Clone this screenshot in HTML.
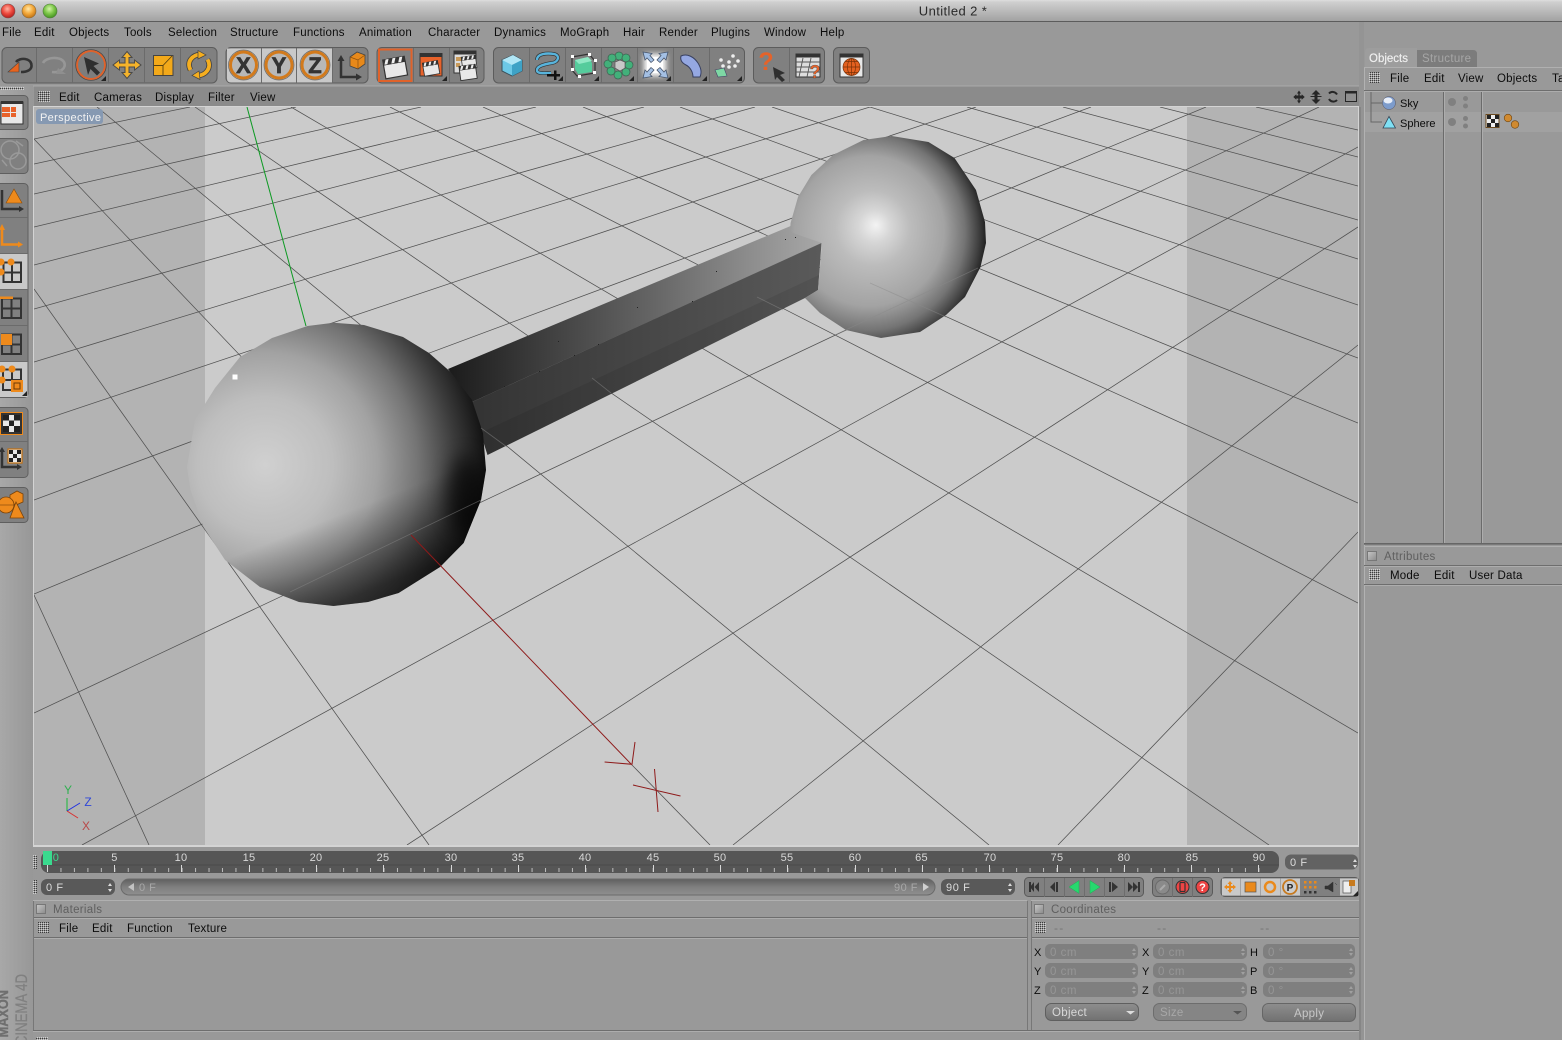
<!DOCTYPE html>
<html><head><meta charset="utf-8"><title>Untitled 2 *</title>
<style>
html,body{margin:0;padding:0;background:#999;width:1562px;height:1040px;overflow:hidden}
svg{display:block;position:absolute;left:0;top:0}
text{font-family:"Liberation Sans",sans-serif}
.m{font-size:11.5px;fill:#0c0c0c;letter-spacing:.2px}
.h{font-size:11.5px;fill:#5f5f5f;letter-spacing:.3px}
.n{font-size:11px;fill:#d8d8d8;text-anchor:middle;letter-spacing:.3px}
.f{font-size:11px;fill:#ddd;letter-spacing:.6px}
.d{font-size:12px;fill:#757575;letter-spacing:1.2px}
.v{font-size:11.5px;fill:#969696;letter-spacing:.5px}
.l{font-size:11px;fill:#0c0c0c}
.xyz{font-size:22px;font-weight:bold;fill:#333;text-anchor:middle;stroke:#333;stroke-width:.7px}
</style></head><body>
<svg width="1562" height="1040" viewBox="0 0 1562 1040" xmlns="http://www.w3.org/2000/svg">
<defs>
<linearGradient id="tb" x1="0" y1="0" x2="0" y2="1"><stop offset="0" stop-color="#dedede"/><stop offset=".1" stop-color="#cfcfcf"/><stop offset="1" stop-color="#a2a2a2"/></linearGradient>
<radialGradient id="tr" cx=".45" cy=".35" r=".7"><stop offset="0" stop-color="#ffb0a0"/><stop offset=".5" stop-color="#ee4a3e"/><stop offset="1" stop-color="#a81818"/></radialGradient>
<radialGradient id="ty" cx=".45" cy=".35" r=".7"><stop offset="0" stop-color="#ffe8a8"/><stop offset=".5" stop-color="#f3a83a"/><stop offset="1" stop-color="#b86a10"/></radialGradient>
<radialGradient id="tg" cx=".45" cy=".35" r=".7"><stop offset="0" stop-color="#d4f4a8"/><stop offset=".5" stop-color="#7cc648"/><stop offset="1" stop-color="#3b8a1c"/></radialGradient>
<pattern id="gp" width="2" height="2" patternUnits="userSpaceOnUse"><rect width="1" height="1" fill="#3c3c3c"/><rect x="1" y="1" width="1" height="1" fill="#d0d0d0"/></pattern>
<pattern id="tick" x="47" y="868" width="13.46" height="4" patternUnits="userSpaceOnUse"><rect width="1" height="4" fill="#bdbdbd"/></pattern>
<radialGradient id="s1" gradientUnits="userSpaceOnUse" cx="265" cy="465" r="225"><stop offset="0" stop-color="#d0d0d0"/><stop offset=".3" stop-color="#bebebe"/><stop offset=".5" stop-color="#a2a2a2"/><stop offset=".68" stop-color="#747474"/><stop offset=".85" stop-color="#3a3a3a"/><stop offset="1" stop-color="#0c0c0c"/></radialGradient>
<linearGradient id="s1b" gradientUnits="userSpaceOnUse" x1="300" y1="530" x2="330" y2="606"><stop offset="0" stop-color="#000" stop-opacity="0"/><stop offset="1" stop-color="#000" stop-opacity=".55"/></linearGradient>
<radialGradient id="s2" gradientUnits="userSpaceOnUse" cx="865" cy="235" r="125" fx="876" fy="225"><stop offset="0" stop-color="#f3f3f3"/><stop offset=".13" stop-color="#d6d6d6"/><stop offset=".3" stop-color="#bcbcbc"/><stop offset=".6" stop-color="#a3a3a3"/><stop offset=".78" stop-color="#747474"/><stop offset=".9" stop-color="#404040"/><stop offset="1" stop-color="#101010"/></radialGradient>
<linearGradient id="bt" gradientUnits="userSpaceOnUse" x1="450" y1="0" x2="822" y2="0"><stop offset="0" stop-color="#1c1c1c"/><stop offset=".25" stop-color="#3e3e3e"/><stop offset=".55" stop-color="#666"/><stop offset=".8" stop-color="#8c8c8c"/><stop offset="1" stop-color="#a8a8a8"/></linearGradient>
<linearGradient id="bf" gradientUnits="userSpaceOnUse" x1="470" y1="0" x2="822" y2="0"><stop offset="0" stop-color="#333"/><stop offset=".5" stop-color="#474747"/><stop offset="1" stop-color="#5a5a5a"/></linearGradient>
<linearGradient id="sl" x1="0" y1="0" x2="0" y2="1"><stop offset="0" stop-color="#5f5f5f"/><stop offset=".5" stop-color="#7f7f7f"/><stop offset="1" stop-color="#8f8f8f"/></linearGradient>
<linearGradient id="btn" x1="0" y1="0" x2="0" y2="1"><stop offset="0" stop-color="#8e8e8e"/><stop offset="1" stop-color="#717171"/></linearGradient>
<linearGradient id="cb" x1="0" y1="0" x2="1" y2="1"><stop offset="0" stop-color="#c8c8c8"/><stop offset="1" stop-color="#8a8a8a"/></linearGradient>
<linearGradient id="left" x1="0" y1="0" x2="1" y2="0"><stop offset="0" stop-color="#a8a8a8"/><stop offset="1" stop-color="#979797"/></linearGradient>
<filter id="gl" x="-30%" y="-30%" width="160%" height="160%"><feGaussianBlur stdDeviation="3"/></filter>
<filter id="gb" x="-100%" y="-100%" width="300%" height="300%"><feGaussianBlur stdDeviation="9"/></filter>
<clipPath id="vc"><rect x="34" y="107" width="1324" height="738"/></clipPath>
<clipPath id="s1c"><path d="M333.500 322.700L307.500 326L272 338L240 357L215 388L195 420L187 467L190.500 490L203.500 527L225 560L260 587L299 602L333.500 606L368 602L398.600 593L440 567L463.600 543L481 500L486 470L483 433L472 400L450.600 372L429 353L403 337L364 325z"/></clipPath>
<g id="clap">
<rect x="-11" y="-4" width="22" height="14" fill="#e8e8e8" stroke="#333" stroke-width="1.2"/>
<rect x="-11" y="-9" width="22" height="5" fill="#333" stroke="#333"/>
<path d="M-8-9l-2 5h3l2-5zM-1-9l-2 5h3l2-5zM6-9l-2 5h3l2-5z" fill="#eee"/>
</g>
<path id="tri" d="M0 0h-5l5-5z" fill="#222"/>
</defs>

<!-- background -->
<rect width="1562" height="1040" fill="#999"/>
<rect width="1562" height="21" fill="url(#tb)"/>
<rect y="21" width="1562" height="1" fill="#5c5c5c"/>
<circle cx="8" cy="11" r="7" fill="url(#tr)" stroke="#7a5050" stroke-width=".6"/>
<circle cx="29" cy="11" r="7" fill="url(#ty)" stroke="#86683a" stroke-width=".6"/>
<circle cx="50" cy="11" r="7" fill="url(#tg)" stroke="#4d7a3c" stroke-width=".6"/>
<text x="953" y="15.500" text-anchor="middle" font-size="13" fill="#2a2a2a" letter-spacing=".4">Untitled 2 *</text>

<!-- menu -->
<text class="m" x="2" y="36">File</text><text class="m" x="34" y="36">Edit</text><text class="m" x="69" y="36">Objects</text><text class="m" x="124" y="36">Tools</text><text class="m" x="168" y="36">Selection</text><text class="m" x="230" y="36">Structure</text><text class="m" x="293" y="36">Functions</text><text class="m" x="359" y="36">Animation</text><text class="m" x="428" y="36">Character</text><text class="m" x="494" y="36">Dynamics</text><text class="m" x="560" y="36">MoGraph</text><text class="m" x="623" y="36">Hair</text><text class="m" x="659" y="36">Render</text><text class="m" x="711" y="36">Plugins</text><text class="m" x="764" y="36">Window</text><text class="m" x="820" y="36">Help</text>

<!-- toolbar groups -->
<g stroke="#5c5c5c" fill="#808080">
<rect x="2" y="47.500" width="215" height="35.500" rx="5"/>
<rect x="226" y="47.500" width="142" height="35.500" rx="5"/>
<rect x="377" y="47.500" width="107" height="35.500" rx="5"/>
<rect x="493.500" y="47.500" width="251" height="35.500" rx="5"/>
<rect x="753.500" y="47.500" width="71" height="35.500" rx="5"/>
<rect x="833.500" y="47.500" width="36" height="35.500" rx="5"/>
</g>
<path d="M227 48.500h34v34h-30q-4 0-4-4zM261 48.500h35v34h-35zM296 48.500h36v34h-36z" fill="#c9c9c9"/>
<path d="M36.500 48V83M72.500 48V83M108.500 48V83M144.500 48V83M180.500 48V83M261.500 48V83M296.500 48V83M332.500 48V83M413.500 48V83M449.500 48V83M529.500 48V83M565.500 48V83M601.500 48V83M637.500 48V83M673.500 48V83M709.500 48V83M789.500 48V83" stroke="#6b6b6b" fill="none"/>

<!-- undo -->
<path d="M16 62C20 57 31 58 31.500 65C32 70 27 72 21 72" fill="none" stroke="#333" stroke-width="2.600"/>
<path d="M8 72L19 72L19 62z" fill="#e8641e" stroke="#444" stroke-width=".6"/>
<!-- redo ghost -->
<path d="M43 63C46 57 60 56 64 62C67 68 60 73 52 72" fill="none" stroke="#979797" stroke-width="2.600"/>
<path d="M58 68l8 6h-10z" fill="#8f8f8f"/>
<!-- select -->
<circle cx="91" cy="65" r="14" fill="#7d7d7d" stroke="#e0622a" stroke-width="2"/>
<circle cx="91" cy="65" r="15.300" fill="none" stroke="#444" stroke-width=".7"/>
<path d="M84 57L99 63.500L93.500 66L100 72.500L97 75.500L90.500 69L88 75z" fill="#2e2e2e"/>
<use href="#tri" x="106" y="81"/>
<!-- move -->
<path d="M127 51.500L132 57.500H129V63H134.500V60L141 65L134.500 70V67H129V72.500H132L127 78.500L122 72.500H125V67H119.500V70L113 65L119.500 60V63H125V57.500H122z" fill="#f5b32b" stroke="#4a4a4a" stroke-width="1"/>
<!-- scale -->
<rect x="153.500" y="55.500" width="19.500" height="20" fill="#f3a91a" stroke="#444"/>
<path d="M154 65.500h9V76M163 65.500L172 56" stroke="#5a4210" fill="none" stroke-width=".9"/>
<!-- rotate -->
<path d="M190.500 70C186 61 193 55 200 54.500M207.500 59.500C212.500 68 205 76 197 75.500" fill="none" stroke="#444" stroke-width="5.500"/>
<path d="M190.500 70C186 61 193 55 200 54.500M207.500 59.500C212.500 68 205 76 197 75.500" fill="none" stroke="#f5ae1f" stroke-width="3.800"/>
<path d="M198 50.500L206 55L198 59zM200 79.500L192 75.500L199 71z" fill="#f5ae1f" stroke="#444" stroke-width=".7"/>
<!-- XYZ -->
<g fill="#b8b8b8" stroke="#d27a1c" stroke-width="3">
<circle cx="243.500" cy="65" r="13"/><circle cx="279" cy="65" r="13"/><circle cx="315" cy="65" r="13"/>
</g>
<g fill="none" stroke="#666" stroke-width=".7"><circle cx="243.500" cy="65" r="15"/><circle cx="279" cy="65" r="15"/><circle cx="315" cy="65" r="15"/></g>
<text class="xyz" x="243.500" y="73">X</text><text class="xyz" x="279" y="73">Y</text><text class="xyz" x="315" y="73">Z</text>
<!-- coord icon -->
<path d="M341 61V77H358" fill="none" stroke="#333" stroke-width="2.500"/>
<path d="M341 55l-3.500 6h7zM362 77l-6-3.500v7z" fill="#333"/>
<path d="M350 57L357 52L365 55V64L358 69L350 66z" fill="#e8891a" stroke="#444" stroke-width=".8"/><path d="M350 57L358 60L365 55M358 60V69" fill="none" stroke="#8a5010" stroke-width=".7"/>
<!-- clappers -->
<rect x="379" y="49.500" width="32.500" height="31.500" fill="none" stroke="#e0622a" stroke-width="2"/>
<use href="#clap" transform="translate(395,67) rotate(-10)"/>
<rect x="420" y="54" width="22" height="22" fill="#e8622a" stroke="#333" stroke-width="1"/>
<rect x="419.500" y="53" width="23" height="4" fill="#333"/>
<use href="#clap" transform="translate(431,68) rotate(-10) scale(.7)"/>
<use href="#tri" x="447" y="81"/>
<rect x="454" y="51" width="22" height="22" fill="#ddd" stroke="#333"/><rect x="454" y="51" width="22" height="3.500" fill="#333"/>
<path d="M456 57h8v4h-8zM456 63h4v4h-4z" fill="#c89a5a"/>
<use href="#clap" transform="translate(469,62) rotate(-8) scale(.65)"/>
<use href="#clap" transform="translate(468,72) rotate(-8) scale(.75)"/>
<!-- primitives -->
<path d="M502 60L513 55L522 60V71L512 76L502 71z" fill="#6cc8e6" stroke="#3a4e58" stroke-width="1"/>
<path d="M502 60L512 65L522 60L513 55z" fill="#b0e6f6"/><path d="M512 65V76L522 71V60z" fill="#3ea2c6"/>
<path d="M537 60C537 53 548 53 554 54C560 55 559 62 552 63C545 64 536 66 537 71C538 74 546 73 551 73" fill="none" stroke="#333" stroke-width="3.800"/>
<path d="M537 60C537 53 548 53 554 54C560 55 559 62 552 63C545 64 536 66 537 71C538 74 546 73 551 73" fill="none" stroke="#58b4dc" stroke-width="2.400"/>
<path d="M547 74h7v-3.500h2.500v3.500h3.500v2.500h-3.500v3.500h-2.500v-3.500h-7z" fill="#111"/>
<use href="#tri" x="563" y="81"/>
<path d="M572 57L589 54L595 61V73L577 76L572 70z" fill="none" stroke="#333" stroke-width="1.200"/>
<path d="M575 60L588 57L592 63V72L578 74L575 69z" fill="#55cc9c"/><path d="M575 60L588 57L592 61L579 64z" fill="#90e8c4"/>
<g fill="#fff"><rect x="571" y="55" width="3" height="3"/><rect x="588" y="53" width="3" height="3"/><rect x="594" y="59" width="3" height="3"/><rect x="593" y="71" width="3" height="3"/><rect x="578" y="75" width="3" height="3"/><rect x="571" y="68" width="3" height="3"/></g>
<use href="#tri" x="599" y="81"/>
<g fill="#42b07a" stroke="#3f5f50" stroke-width=".7"><circle cx="619" cy="56" r="4"/><circle cx="626" cy="58" r="4"/><circle cx="629" cy="65" r="4"/><circle cx="626" cy="72" r="4"/><circle cx="618" cy="75" r="4"/><circle cx="611" cy="71" r="4"/><circle cx="608" cy="64" r="4"/><circle cx="612" cy="58" r="4"/></g>
<path d="M615 62l5-2 5 2v6l-5 3-5-3z" fill="#c8c8c8" stroke="#555" stroke-width=".7"/>
<use href="#tri" x="634" y="81"/>
<rect x="644" y="54" width="22" height="22" fill="#fff" filter="url(#gl)"/>
<rect x="647" y="57" width="16" height="16" fill="#fff"/>
<g fill="#a4c0e4" stroke="#46546a" stroke-width=".8"><path d="M643 52L652 53.500L650 55.500L654 60L651 62.500L647 58L645 60z"/><path d="M668 52L659 53.500L661 55.500L657 60L660 62.500L664 58L666 60z"/><path d="M643 78L652 76.500L650 74.500L654 70L651 67.500L647 72L645 70z"/><path d="M668 78L659 76.500L661 74.500L657 70L660 67.500L664 72L666 70z"/></g>
<use href="#tri" x="671" y="81"/>
<path d="M681 56C687 53 694 57 698 63C701 68 702 72 700 77L693 77C693 72 690 67 686 65C682 63 680 60 681 56z" fill="#95a8e2" stroke="#384060" stroke-width="1"/>
<use href="#tri" x="707" y="81"/>
<g fill="#eee"><circle cx="733" cy="56" r="1.800"/><circle cx="721" cy="60" r="1.800"/><circle cx="729" cy="62" r="1.800"/><circle cx="738" cy="61" r="1.800"/><circle cx="735" cy="66" r="1.800"/><circle cx="723" cy="66" r="1.800"/><circle cx="729" cy="67" r="1.800"/></g>
<path d="M715 70L724 68L727 76L718 77z" fill="#7ed8a4" stroke="#446" stroke-width=".6"/>
<use href="#tri" x="742" y="81"/>
<!-- help -->
<text x="766" y="70" font-size="25" font-weight="bold" fill="#e5632a" text-anchor="middle">?</text>
<path d="M773 67L785 73L780 75L785 80L782 82L777 77L775 80z" fill="#2f2f2f"/>
<rect x="796" y="54" width="24" height="23" fill="#ddd" stroke="#333"/><rect x="796" y="53.500" width="24" height="4" fill="#333"/>
<path d="M796 62h24M796 67h24M796 72h24M803 58L799 77M811 58L807 77" stroke="#555" fill="none" stroke-width=".9"/>
<text x="815" y="78" font-size="18" font-weight="bold" fill="#e5632a" text-anchor="middle" stroke="#333" stroke-width=".3">?</text>
<!-- render -->
<rect x="840" y="54" width="23" height="23" fill="#e8e8e8" stroke="#333"/><rect x="840" y="53.500" width="23" height="4" fill="#333"/>
<circle cx="851.500" cy="67" r="8.500" fill="#e4601f" stroke="#7a3208" stroke-width=".7"/>
<path d="M843 67h17M851.500 58.500v17M845 61.500h13M845 72.500h13" stroke="#7a3208" fill="none" stroke-width=".7"/><ellipse cx="851.500" cy="67" rx="4" ry="8.500" fill="none" stroke="#7a3208" stroke-width=".7"/>

<!-- viewport header -->
<rect x="34" y="86" width="1325" height="21" fill="#8b8b8b"/>
<path d="M33 86h1326" stroke="#aaa"/>
<rect x="38" y="91" width="12" height="11" fill="url(#gp)"/>
<text class="m" x="59" y="101">Edit</text><text class="m" x="94" y="101">Cameras</text><text class="m" x="155" y="101">Display</text><text class="m" x="208" y="101">Filter</text><text class="m" x="250" y="101">View</text>
<g fill="#262626">
<path d="M1299 90.500l2 3h-1.300v2h2v-1.300l3 2.800-3 2.800v-1.300h-2v2h1.300l-2 3-2-3h1.300v-2h-2v1.300l-3-2.800 3-2.800v1.300h2v-2h-1.300z"/>
<path d="M1316 90l4.500 4.500h-3V96h4v1h-4v2.500h3L1316 104l-4.500-4.500h3V97h-4v-1h4v-1.500h-3z"/>
</g>
<path d="M1329 93.500a5 5 0 0 1 8 1M1337 100a5 5 0 0 1-8-1" fill="none" stroke="#262626" stroke-width="2"/>
<rect x="1345.500" y="91.500" width="11" height="10" fill="#8f8f8f" stroke="#262626"/><rect x="1345" y="91" width="12" height="2.500" fill="#262626"/>

<!-- viewport -->
<rect x="33" y="106" width="1327" height="741" fill="#d4d4d4"/>
<rect x="34" y="107" width="1324" height="738" fill="#cbcbcb"/>
<rect x="34" y="107" width="171" height="738" fill="#b3b3b3"/>
<rect x="1187" y="107" width="171" height="738" fill="#b3b3b3"/>
<g clip-path="url(#vc)">
<g stroke="#505050" stroke-width=".75" fill="none">
<path d="M733 845L1358 345M1058 845L1358 532M407 845L1358 227M82 845L1358 147M34 713L1319 107M34 594L1206 107M34 500L1091 107M34 423L976 107M34 362L870 107M34 309L755 107M34 265L644 107M34 227L536 107M34 194L421 107M34 164L296 107M34 139L190 107"/>
<path d="M1269 845L195 107M1358 733L291 107M1358 603L390 107M1358 503L483 107M1358 423L583 107M1358 358L680 107M1358 305L772 107M1358 259L870 107M1358 220L967 107M1358 186L1063 107M1358 157L1160 107M1358 130L1256 107M989 845L97 107M34 139L411 535M632 765L710 845M429 845L34 289M149 845L34 595"/>
</g>
<path d="M247 107L306 326" stroke="#0c9a22" stroke-width="1" fill="none"/>

<!-- bar -->
<path d="M448 369L790.600 226L822 243L472 402z" fill="url(#bt)"/>
<path d="M472 402L821.500 243L818 290L805 298L487.500 455L478 425z" fill="url(#bf)"/>
<path d="M480 433L819 275L818 290L805 298L487.500 455z" fill="#000" opacity=".08"/>
<g fill="#222"><rect x="637" y="307" width="1" height="1"/><rect x="692" y="301" width="1" height="1"/><rect x="558" y="341" width="1" height="1"/><rect x="598" y="344" width="1" height="1"/><rect x="574" y="355" width="1" height="1"/><rect x="539" y="371" width="1" height="1"/><rect x="504" y="386" width="1" height="1"/><rect x="716" y="271" width="1" height="1"/><rect x="785" y="239" width="1" height="1"/><rect x="795" y="237" width="1" height="1"/></g>

<!-- spheres -->
<path d="M891.600 136L863.500 140L833 155L811.400 175L798 197L790.600 223L790 232L822 243L818 290L805 298L820 313L846 330L881 338L920 332L946 315L965 297L980.500 267L986 243L985 222L976 190L954.500 158L928.500 142z" fill="url(#s2)"/>
<path d="M333.500 322.700L307.500 326L272 338L240 357L215 388L195 420L187 467L190.500 490L203.500 527L225 560L260 587L299 602L333.500 606L368 602L398.600 593L440 567L463.600 543L481 500L486 470L483 433L472 400L450.600 372L429 353L403 337L364 325z" fill="url(#s1)"/>
<path d="M333.500 322.700L307.500 326L272 338L240 357L215 388L195 420L187 467L190.500 490L203.500 527L225 560L260 587L299 602L333.500 606L368 602L398.600 593L440 567L463.600 543L481 500L486 470L483 433L472 400L450.600 372L429 353L403 337L364 325z" fill="url(#s1b)"/>
<g clip-path="url(#s1c)"><ellipse cx="465" cy="495" rx="18" ry="40" fill="#000" opacity=".6" filter="url(#gb)"/></g>
<g stroke="#8a8a8a" stroke-width=".8" fill="none" opacity=".5">
<path d="M290 592L481 500"/>
<path d="M835 335L978 268M870 283L946 317"/>
<path d="M481 428L507 447M592 378L611 393M757 297L783 310"/>
</g>
<path d="M235 377m-2.500-2.500h5v5h-5z" fill="#fff"/>

<!-- red axis -->
<g stroke="#8e1a1a" stroke-width="1" fill="none">
<path d="M411 535L632 765M604.600 762L632 764.300L635 742M633 785L680.500 796M654.500 769L658 812"/>
</g>
<!-- small axis -->
<path d="M67 811V798" stroke="#18b838" stroke-width="1"/><path d="M67 811L80 803" stroke="#2030e0" stroke-width="1"/><path d="M67 811L78 818" stroke="#d83030" stroke-width="1"/>
<text x="68" y="794" font-size="12" fill="#30b050" text-anchor="middle">Y</text>
<text x="88" y="806" font-size="12" fill="#3048d8" text-anchor="middle">Z</text>
<text x="86" y="830" font-size="12" fill="#b84848" text-anchor="middle">X</text>
</g>
<rect x="36" y="109" width="67" height="15" rx="3" fill="#8699b2"/>
<text x="40" y="121" font-size="11" fill="#f2f2f2" letter-spacing=".35">Perspective</text>

<!-- left column -->
<rect x="0" y="86" width="33" height="954" fill="url(#left)"/>
<rect x="0" y="87" width="24" height="3" fill="url(#gp)"/>
<g stroke="#5f5f5f" fill="#808080">
<rect x="-5" y="95.500" width="33" height="34" rx="4"/>
<rect x="-5" y="138.500" width="33" height="35" rx="4"/>
<rect x="-5" y="183.500" width="33" height="214" rx="4"/>
<rect x="-5" y="407.500" width="33" height="70" rx="4"/>
<rect x="-5" y="487.500" width="33" height="35" rx="4"/>
</g>
<path d="M0 254h27.500v35H0zM0 361h27.500v36H0z" fill="#c9c9c9"/>
<path d="M0 217.500h28M0 253.500h28M0 289.500h28M0 325.500h28M0 361.500h28M0 441.500h28" stroke="#6b6b6b"/>
<!-- left icons -->
<rect x="1" y="102" width="22" height="22" fill="#e8e8e8" stroke="#333"/><rect x="1" y="101" width="22" height="3" fill="#333"/>
<path d="M2 107h8v5h-8zM11 107h5v5h-5zM2 113h8v4h-8zM11 113h5v4h-5z" fill="#e8622a"/>
<g fill="none" stroke="#9a9a9a" stroke-width="1.500"><circle cx="10" cy="150" r="9"/><circle cx="18" cy="161" r="8"/><path d="M16 141l7 5M2 160l5 6"/></g>
<path d="M2 190V209H19" fill="none" stroke="#333" stroke-width="2.500"/><path d="M19 206l5 3-5 3z" fill="#333"/>
<path d="M6 203L14 189L22 203z" fill="#ee8a1c" stroke="#8a4c0a" stroke-width=".6"/>
<path d="M2 228V244.500H19" fill="none" stroke="#ee8a1c" stroke-width="2.500"/><path d="M2 224l-3 6h6zM23 244.500l-5-3v6z" fill="#ee8a1c"/>
<path d="M3.500 262.500H21V282H3.500zM12 263V282M3 272.500H21" fill="none" stroke="#333" stroke-width="2"/>
<g fill="#ee8a1c"><circle cx="1" cy="262" r="3.500"/><circle cx="11" cy="262" r="3.500"/><circle cx="1" cy="272" r="3.500"/></g>
<path d="M2 298.500H21V318H2zM11.500 299V318M2 308.500H21" fill="none" stroke="#333" stroke-width="2"/><path d="M0 296.500H13V299H0z" fill="#ee8a1c"/>
<path d="M2 334.500H21V354H2zM11.500 335V354M2 344.500H21" fill="none" stroke="#333" stroke-width="2"/><rect x="1" y="334" width="11" height="11" fill="#ee8a1c"/>
<path d="M3 369.500H21V390H3zM12 370V390M3 380H21" fill="none" stroke="#333" stroke-width="2"/>
<g fill="#ee8a1c"><circle cx="2" cy="369" r="3.500"/><circle cx="12" cy="369" r="3.500"/><circle cx="2" cy="380" r="3.500"/></g>
<rect x="11" y="380" width="12" height="12" fill="#ee8a1c"/><rect x="14" y="383" width="6" height="6" fill="#ee8a1c" stroke="#6a3a08"/>
<use href="#tri" x="27" y="396"/>
<rect x="0" y="412" width="23" height="23" fill="#ee8a1c"/><rect x="1" y="413" width="21" height="21" fill="#333"/>
<rect x="3" y="415" width="17" height="17" fill="#e8e8e8"/>
<path d="M3 415h6v5.500H3zM14 415h6v5.500h-6zM9 420.500h5V426H9zM3 426h6v6H3zM14 426h6v6h-6z" fill="#222"/>
<path d="M2 450V467H19" fill="none" stroke="#333" stroke-width="2.500"/><path d="M2 447l-3 5h6zM22 467l-5-3v6z" fill="#333"/>
<rect x="8" y="449" width="14" height="14" fill="#e8e8e8" stroke="#c27010" stroke-width="1.200"/><path d="M9 450h4v4H9zM17 450h4v4h-4zM13 454h4v4h-4zM9 458h4v4H9zM17 458h4v4h-4z" fill="#222"/>
<path d="M10 495L17 491L23 494V502L16 505L10 502z" fill="#ee8a1c" stroke="#7a4208" stroke-width=".8"/>
<circle cx="6" cy="505" r="8" fill="#ee8a1c" stroke="#7a4208" stroke-width=".8"/><path d="M-2 505h16" stroke="#7a4208" stroke-width=".6"/>
<path d="M16 502L24 518H10z" fill="#ee8a1c" stroke="#7a4208" stroke-width=".8"/>
<!-- logo -->
<text transform="translate(8,990) rotate(-90) scale(.85,1)" text-anchor="end" font-size="15" font-weight="bold" fill="#6f6f6f" stroke="#6f6f6f" stroke-width=".4">MAXON</text>
<text transform="translate(27,974) rotate(-90) scale(.8,1)" text-anchor="end" font-size="16.500" fill="#808080" stroke="#808080" stroke-width=".3">CINEMA 4D</text>

<!-- timeline -->
<rect x="33" y="855" width="4" height="14" fill="url(#gp)"/>
<rect x="41" y="851" width="1238" height="22" rx="8" fill="#565656"/>
<path d="M41 865h1238" stroke="#4a4a4a"/>
<rect x="43" y="851" width="9" height="14" fill="#3ad98e"/>
<rect x="47" y="868" width="1213" height="4" fill="url(#tick)"/>
<g fill="#d8d8d8">
<path d="M47 865h1v7h-1zM114 865h1v7h-1zM181 865h1v7h-1zM249 865h1v7h-1zM316 865h1v7h-1zM383 865h1v7h-1zM451 865h1v7h-1zM518 865h1v7h-1zM585 865h1v7h-1zM653 865h1v7h-1zM720 865h1v7h-1zM787 865h1v7h-1zM855 865h1v7h-1zM922 865h1v7h-1zM989 865h1v7h-1zM1057 865h1v7h-1zM1124 865h1v7h-1zM1191 865h1v7h-1zM1258 865h1v7h-1z"/>
</g>
<text class="n" x="56" y="861" style="fill:#3ad98e">0</text><text class="n" x="114.500" y="861">5</text><text class="n" x="181" y="861">10</text><text class="n" x="249" y="861">15</text><text class="n" x="316" y="861">20</text><text class="n" x="383" y="861">25</text><text class="n" x="451" y="861">30</text><text class="n" x="518" y="861">35</text><text class="n" x="585" y="861">40</text><text class="n" x="653" y="861">45</text><text class="n" x="720" y="861">50</text><text class="n" x="787" y="861">55</text><text class="n" x="855" y="861">60</text><text class="n" x="921.500" y="861">65</text><text class="n" x="990" y="861">70</text><text class="n" x="1057" y="861">75</text><text class="n" x="1124" y="861">80</text><text class="n" x="1192" y="861">85</text><text class="n" x="1259" y="861">90</text>
<rect x="1285" y="854.500" width="73" height="15" rx="6" fill="#626262"/>
<text class="f" x="1290" y="866">0 F</text><path d="M1355 859l-2 3h4zM1355 868l-2-3h4z" fill="#ddd"/>

<!-- row 2 -->
<rect x="33" y="880" width="4" height="14" fill="url(#gp)"/>
<rect x="41" y="879" width="74" height="16" rx="6" fill="#595959"/>
<text class="f" x="46" y="891">0 F</text><path d="M110 883l-2 3h4zM110 892l-2-3h4z" fill="#ddd"/>
<rect x="121" y="879" width="814" height="16" rx="8" fill="url(#sl)" stroke="#6a6a6a"/>
<path d="M128 887l6-4v8z" fill="#c2c2c2"/><text x="139" y="891" font-size="11" letter-spacing=".5" fill="#a8a8a8">0 F</text>
<text x="894" y="891" font-size="11" letter-spacing=".5" fill="#a8a8a8">90 F</text><path d="M929 887l-6-4v8z" fill="#d0d0d0"/>
<rect x="941" y="879" width="74" height="16" rx="6" fill="#595959"/>
<text class="f" x="946" y="891">90 F</text><path d="M1010 883l-2 3h4zM1010 892l-2-3h4z" fill="#ddd"/>

<!-- transport -->
<rect x="1024.500" y="877.500" width="119" height="19" rx="4" fill="#808080" stroke="#5a5a5a"/>
<path d="M1044.500 878v19M1064.500 878v19M1084.500 878v19M1104.500 878v19M1124.500 878v19" stroke="#6d6d6d"/>
<g fill="#333"><path d="M1029 882h2v10h-2zM1039 882v10l-4.500-5zM1034 882v10l-4-5z"/><path d="M1055 882v10l-5-5zM1056 882h2v10h-2z"/><path d="M1109 882h2v10h-2zM1112 882l6 5-6 5z"/><path d="M1128 882l5 5-5 5zM1133 882l5 5-5 5zM1138 882h2v10h-2z"/></g>
<path d="M1069 887l10-6.500v13z" fill="#27d86e" stroke="#2a5" stroke-width=".5"/>
<path d="M1100 887l-10-6.500v13z" fill="#27d86e" stroke="#2a5" stroke-width=".5"/>
<rect x="1152.500" y="877.500" width="60" height="19" rx="4" fill="#808080" stroke="#5a5a5a"/>
<path d="M1172.500 878v19M1192.500 878v19" stroke="#6d6d6d"/>
<circle cx="1162.500" cy="887" r="7" fill="#8a8a8a" stroke="#6a6a6a"/><path d="M1160 890l5-5" stroke="#aaa" stroke-width="2"/>
<circle cx="1182.500" cy="887" r="6.500" fill="#e44" stroke="#333"/><path d="M1180 882.500h5M1180 891.500h5M1180 882.500v9M1185 882.500v9" stroke="#333" stroke-width="1.200" fill="none"/>
<circle cx="1202.500" cy="887" r="6.500" fill="#e44" stroke="#333"/><text x="1202.500" y="891" font-size="11" font-weight="bold" fill="#fff" text-anchor="middle">?</text>
<rect x="1221" y="877.500" width="138" height="19" rx="4" fill="#808080" stroke="#5a5a5a"/>
<path d="M1222 878.500h18v17h-18zM1240.500 878.500h19.500v17h-19.500zM1260.500 878.500h19.500v17h-19.500zM1280.500 878.500h19.500v17h-19.500zM1340 878.500h18v17h-18z" fill="#c9c9c9"/>
<path d="M1230 881l2.500 3h-1.500v2h2v-1.500l3 2.500-3 2.500V888h-2v2h1.500l-2.500 3-2.500-3h1.500v-2h-2v1.500l-3-2.500 3-2.500V886h2v-2h-1.500z" fill="#ea8a1c"/>
<rect x="1245" y="882" width="11" height="10" fill="#ea8a1c" stroke="#555" stroke-width=".7"/>
<circle cx="1270" cy="887" r="5" fill="none" stroke="#ea8a1c" stroke-width="2.500"/>
<circle cx="1290" cy="887" r="7" fill="#ccc" stroke="#c67a20" stroke-width="1.800"/><text x="1290" y="891" font-size="10" font-weight="bold" fill="#222" text-anchor="middle">P</text>
<g fill="#ea8a1c"><rect x="1304" y="881" width="2.500" height="2.500"/><rect x="1309" y="881" width="2.500" height="2.500"/><rect x="1314" y="881" width="2.500" height="2.500"/><rect x="1304" y="886" width="2.500" height="2.500"/><rect x="1309" y="886" width="2.500" height="2.500"/><rect x="1314" y="886" width="2.500" height="2.500"/></g>
<g fill="#333"><rect x="1304" y="891" width="2.500" height="2.500"/><rect x="1309" y="891" width="2.500" height="2.500"/><rect x="1314" y="891" width="2.500" height="2.500"/></g>
<path d="M1325 886h3l5-4v10l-5-3h-3zM1335 883l2 2" fill="#333" stroke="#333" stroke-width=".5"/>
<path d="M1343 881h8v12h-8z" fill="#eee" stroke="#555" stroke-width=".7"/><rect x="1349" y="880" width="6" height="6" fill="#c77a1e"/>
<use href="#tri" x="1358" y="896"/>

<!-- materials -->
<path d="M33 900.500H1027M1031 900.500H1359" stroke="#b0b0b0"/>
<path d="M33.500 901V1032M1027.500 901V1031M1031.500 901V1031M1359.500 901V1031" stroke="#777" fill="none"/>
<rect x="36.500" y="904.500" width="9" height="9" fill="url(#cb)" stroke="#777"/>
<text class="h" x="53" y="913">Materials</text>
<path d="M34 917.500H1027M1032 917.500H1359" stroke="#6e6e6e"/><path d="M34 918.500H1027M1032 918.500H1359" stroke="#adadad"/>
<rect x="38" y="922" width="11" height="11" fill="url(#gp)"/>
<text class="m" x="59" y="932">File</text><text class="m" x="92" y="932">Edit</text><text class="m" x="127" y="932">Function</text><text class="m" x="188" y="932">Texture</text>
<path d="M34 937.500H1027M1032 937.500H1359" stroke="#6e6e6e"/><path d="M34 938.500H1027M1032 938.500H1359" stroke="#adadad"/>
<path d="M33 1030.500H1359" stroke="#6e6e6e"/><path d="M33 1031.500H1359" stroke="#adadad"/>
<rect x="36" y="1037" width="12" height="3" fill="url(#gp)"/>

<!-- coordinates -->
<rect x="1034.500" y="904.500" width="9" height="9" fill="url(#cb)" stroke="#777"/>
<text class="h" x="1051" y="913">Coordinates</text>
<rect x="1035" y="922" width="11" height="11" fill="url(#gp)"/>
<text class="d" x="1054" y="932">--</text><text class="d" x="1157" y="932">--</text><text class="d" x="1260" y="932">--</text>
<g fill="#7f7f7f">
<rect x="1045" y="944" width="93" height="15" rx="5"/><rect x="1153" y="944" width="94" height="15" rx="5"/><rect x="1263" y="944" width="92" height="15" rx="5"/>
<rect x="1045" y="963" width="93" height="15" rx="5"/><rect x="1153" y="963" width="94" height="15" rx="5"/><rect x="1263" y="963" width="92" height="15" rx="5"/>
<rect x="1045" y="982" width="93" height="15" rx="5"/><rect x="1153" y="982" width="94" height="15" rx="5"/><rect x="1263" y="982" width="92" height="15" rx="5"/>
</g>
<g fill="#a0a0a0"><path d="M1134 948l-2 3h4zM1134 956l-2-3h4zM1243 948l-2 3h4zM1243 956l-2-3h4zM1351 948l-2 3h4zM1351 956l-2-3h4zM1134 967l-2 3h4zM1134 975l-2-3h4zM1243 967l-2 3h4zM1243 975l-2-3h4zM1351 967l-2 3h4zM1351 975l-2-3h4zM1134 986l-2 3h4zM1134 994l-2-3h4zM1243 986l-2 3h4zM1243 994l-2-3h4zM1351 986l-2 3h4zM1351 994l-2-3h4z"/></g>
<text class="l" x="1034" y="956">X</text><text class="l" x="1142" y="956">X</text><text class="l" x="1250" y="956">H</text>
<text class="l" x="1034" y="975">Y</text><text class="l" x="1142" y="975">Y</text><text class="l" x="1250" y="975">P</text>
<text class="l" x="1034" y="994">Z</text><text class="l" x="1142" y="994">Z</text><text class="l" x="1250" y="994">B</text>
<text class="v" x="1050" y="956">0 cm</text><text class="v" x="1158" y="956">0 cm</text><text class="v" x="1268" y="956">0 °</text>
<text class="v" x="1050" y="975">0 cm</text><text class="v" x="1158" y="975">0 cm</text><text class="v" x="1268" y="975">0 °</text>
<text class="v" x="1050" y="994">0 cm</text><text class="v" x="1158" y="994">0 cm</text><text class="v" x="1268" y="994">0 °</text>
<rect x="1045.500" y="1003.500" width="93" height="17" rx="6" fill="url(#btn)" stroke="#5f5f5f"/>
<rect x="1153.500" y="1003.500" width="93" height="17" rx="6" fill="#858585" stroke="#6d6d6d"/>
<rect x="1262.500" y="1003.500" width="93" height="18" rx="6" fill="url(#btn)" stroke="#666"/>
<text x="1052" y="1016" font-size="11.500" fill="#d8d8d8" letter-spacing=".3">Object</text><path d="M1126 1011h9l-4.500 3.500z" fill="#ddd"/>
<text x="1160" y="1016" font-size="11.500" fill="#a8a8a8" letter-spacing=".3">Size</text><path d="M1233 1011h9l-4.500 3.500z" fill="#555"/>
<text x="1294" y="1017" font-size="11.500" fill="#c8c8c8" letter-spacing=".3">Apply</text>

<!-- right panel -->
<rect x="1359" y="22" width="5" height="1018" fill="#949494"/>
<path d="M1360 107V1040" stroke="#777"/>
<path d="M1365 67V52q0-4 4-4h48v19z" fill="#9d9d9d"/>
<path d="M1417 50h56q4 0 4 4v13h-60z" fill="#7c7c7c"/>
<text x="1369" y="62" font-size="11.500" fill="#f0f0f0" stroke="#f0f0f0" stroke-width=".15">Objects</text>
<text x="1422" y="62" font-size="11.500" fill="#a6a6a6" letter-spacing=".3">Structure</text>
<path d="M1364 67.500H1562" stroke="#b0b0b0"/>
<path d="M1364.500 68V1040" stroke="#b2b2b2"/>
<rect x="1369" y="72" width="11" height="11" fill="url(#gp)"/>
<text class="m" x="1390" y="82">File</text><text class="m" x="1424" y="82">Edit</text><text class="m" x="1458" y="82">View</text><text class="m" x="1497" y="82">Objects</text><text class="m" x="1552" y="82">Ta</text>
<path d="M1364 90.500H1562" stroke="#6e6e6e"/><path d="M1364 91.500H1562" stroke="#adadad"/>
<rect x="1365" y="112" width="197" height="20" fill="#a1a1a1"/>
<path d="M1443.500 92V543M1481.500 92V543" stroke="#6b6b6b"/><path d="M1444.500 92V543M1482.500 92V543" stroke="#adadad"/>
<path d="M1371 92V122H1382M1371 103H1382" stroke="#666" fill="none"/>
<circle cx="1389" cy="103" r="6.500" fill="#7d9ccc" stroke="#556" stroke-width=".5"/><ellipse cx="1388" cy="100.500" rx="4.500" ry="3" fill="#e8eef8"/>
<path d="M1389 116.500L1395.500 128H1383z" fill="#7fe0f4" stroke="#345" stroke-width=".8"/>
<text class="l" x="1400" y="107">Sky</text><text class="l" x="1400" y="127">Sphere</text>
<g fill="#808080"><circle cx="1452" cy="102" r="4"/><circle cx="1452" cy="122" r="4"/><circle cx="1465.500" cy="98.500" r="2.500"/><circle cx="1465.500" cy="106" r="2.500"/><circle cx="1465.500" cy="118.500" r="2.500"/><circle cx="1465.500" cy="126" r="2.500"/></g>
<rect x="1486" y="114.500" width="13" height="13" fill="#eee" stroke="#6a4a20"/>
<path d="M1487 115h4v4h-4zM1495 115h4v4h-4zM1491 119h4v4h-4zM1487 123h4v4h-4zM1495 123h4v4h-4z" fill="#222"/>
<circle cx="1508" cy="118" r="3.800" fill="#d08a30" stroke="#6a4210" stroke-width=".6"/><circle cx="1515" cy="124.500" r="3.800" fill="#d08a30" stroke="#6a4210" stroke-width=".6"/>
<path d="M1364 543.500H1562" stroke="#666"/><path d="M1364 544.500H1562" stroke="#7a7a7a"/><path d="M1364 546.500H1562" stroke="#b0b0b0"/>
<rect x="1367.500" y="551.500" width="9" height="9" fill="url(#cb)" stroke="#777"/>
<text class="h" x="1384" y="560">Attributes</text>
<path d="M1364 565.500H1562" stroke="#6e6e6e"/><path d="M1364 566.500H1562" stroke="#adadad"/>
<rect x="1369" y="569" width="11" height="11" fill="url(#gp)"/>
<text class="m" x="1390" y="579">Mode</text><text class="m" x="1434" y="579">Edit</text><text class="m" x="1469" y="579">User Data</text>
<path d="M1364 584.500H1562" stroke="#6e6e6e"/><path d="M1364 585.500H1562" stroke="#adadad"/>
</svg>
</body></html>
